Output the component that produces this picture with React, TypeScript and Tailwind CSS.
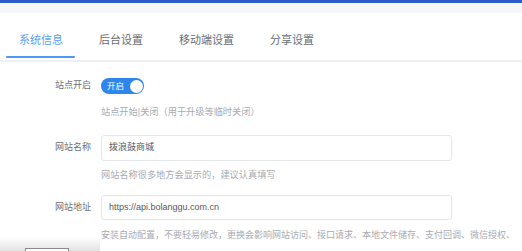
import React from 'react';

const tabs = ['系统信息', '后台设置', '移动端设置', '分享设置'];

const Label = ({ text }: { text: string }) => (
  <div className="w-[91px] flex-none text-right text-[9px] text-[#6e7076]">{text}</div>
);

const Hint = ({ text, className }: { text: string; className?: string }) => (
  <div className={`ml-[101px] whitespace-nowrap text-[9.2px] leading-[16px] text-[#a8abb2] ${className ?? ''}`}>
    {text}
  </div>
);

const App = () => {
  return (
    <div
      className="relative w-[522px] h-[251px] overflow-hidden bg-white"
      style={{ fontFamily: '"Liberation Sans", "Noto Sans CJK SC", sans-serif' }}
    >
      <div className="h-[3px] bg-[#2b5bc6]" />
      <div className="h-[10px] bg-[#f5f6f8]" />

      <div className="flex h-[49px] items-center gap-[36px] border-b-2 border-[#eef0f3] pl-[19px] pt-[7px]">
        {tabs.map((t, i) => (
          <div
            key={t}
            className={`relative text-[11px] ${i === 0 ? 'text-[#5aa1f3]' : 'text-[#6a6d72]'}`}
          >
            {t}
            {i === 0 && (
              <div className="absolute left-[-13px] right-[-12px] top-[24px] h-[2px] rounded bg-[#4d9af5]" />
            )}
          </div>
        ))}
      </div>

      <div className="pt-[16px]">
        <div className="flex items-center gap-[10px]">
          <Label text="站点开启" />
          <div className="flex h-[16px] w-[43px] items-center justify-between rounded-full bg-[#2f86ea] pl-[6px] pr-[1.5px]">
            <span className="text-[8.5px] leading-none text-white">开启</span>
            <span className="h-[13px] w-[13px] rounded-full bg-white" />
          </div>
        </div>
        <Hint text="站点开始|关闭（用于升级等临时关闭）" className="mt-[10px]" />

        <div className="mt-[15px] flex items-center gap-[10px]">
          <Label text="网站名称" />
          <div className="flex h-[26px] w-[351px] items-center rounded-[3px] border border-[#e4e6eb] px-[7px] text-[9px] text-[#55585e]">
            拨浪鼓商城
          </div>
        </div>
        <Hint text="网站名称很多地方会显示的，建议认真填写" className="mt-[6px]" />

        <div className="mt-[12px] flex items-center gap-[10px]">
          <Label text="网站地址" />
          <div className="flex h-[25px] w-[351px] items-center rounded-[3px] border border-[#e4e6eb] px-[7px] text-[9px] text-[#55585e]">
            https://api.bolanggu.com.cn
          </div>
        </div>
        <div className="relative z-10 mt-[7px] ml-[101px] whitespace-nowrap text-[9px] leading-[16px] text-[#a8abb2]">
          安装自动配置，不要轻易修改，更换会影响网站访问、接口请求、本地文件储存、支付回调、微信授权、
        </div>
      </div>

      <div className="absolute bottom-0 left-0 h-[14px] w-[100px] bg-gradient-to-b from-transparent to-[#e3e3e3]" />
      <div className="absolute left-[25px] top-[248px] h-[10px] w-[44px] border border-[#8a8a8a] bg-white" />
    </div>
  );
};

export default App;
